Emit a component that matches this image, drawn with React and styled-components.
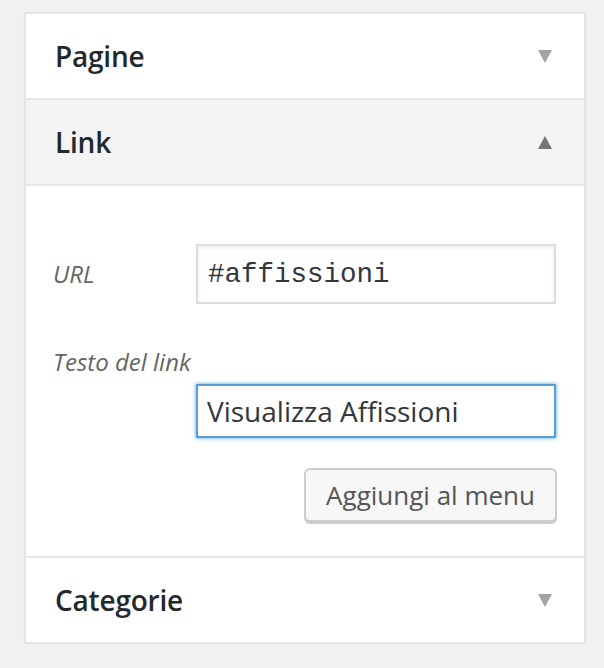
import React from 'react';
import styled, { createGlobalStyle } from 'styled-components';

const GlobalStyle = createGlobalStyle`
  html, body {
    margin: 0;
    padding: 0;
    background: #f1f1f1;
  }
  body {
    font-family: 'Open Sans', 'Noto Sans', Arial, sans-serif;
    color: #23282d;
  }
`;

const Page = styled.div`
  padding: 12px 0 0 24px;
`;

const Panel = styled.div`
  width: 558px;
  border: 2px solid #e5e5e5;
  background: #fff;
  box-shadow: 0 2px 2px rgba(0, 0, 0, 0.04);
`;

const Section = styled.div`
  & + & {
    border-top: 2px solid #e5e5e5;
  }
`;

const Header = styled.div`
  display: flex;
  align-items: center;
  justify-content: space-between;
  height: 84px;
  padding: 0 32px 0 29px;
  background: ${p => (p.$open ? '#f4f4f4' : '#fff')};
  border-bottom: ${p => (p.$open ? '2px solid #e5e5e5' : 'none')};
`;

const Title = styled.h3`
  margin: 0;
  font-size: 28px;
  font-weight: 600;
  color: #23282d;
  letter-spacing: -0.2px;
`;

const Arrow = styled.svg`
  width: 14px;
  height: 13px;
  display: block;
  fill: ${p => (p.$open ? '#72777c' : '#a0a5aa')};
`;

const Body = styled.div`
  padding: 58px 28px 34px 27px;
  display: flex;
  flex-direction: column;
`;

const Row = styled.div`
  display: flex;
  align-items: center;
`;

const Label = styled.label`
  font-style: italic;
  font-size: 24px;
  line-height: 32px;
  color: #666;
  width: ${p => (p.$inline ? '143px' : 'auto')};
  flex-shrink: 0;
`;

const Input = styled.input`
  box-sizing: border-box;
  width: 360px;
  height: ${p => (p.$code ? '60px' : '54px')};
  margin: 0;
  padding: 0 0 0 ${p => (p.$code ? '10px' : '9px')};
  border: 2px solid ${p => (p.$focus ? '#5b9dd9' : '#ddd')};
  box-shadow: ${p =>
    p.$focus ? '0 0 4px rgba(30, 140, 190, 0.8)' : 'inset 0 2px 4px rgba(0, 0, 0, 0.07)'};
  font-family: ${p => (p.$code ? "'Liberation Mono', 'DejaVu Sans Mono', monospace" : "'Open Sans', sans-serif")};
  font-size: ${p => (p.$code ? '27.5px' : '28px')};
  color: #32373c;
  background: #fff;
  outline: none;
`;

const FieldStack = styled.div`
  display: flex;
  flex-direction: column;
  margin-top: 42px;
  gap: 6px;
  ${Input} {
    align-self: flex-end;
  }
`;

const Actions = styled.div`
  display: flex;
  justify-content: flex-end;
  margin-top: 30px;
`;

const Button = styled.button`
  box-sizing: border-box;
  height: 54px;
  padding: 0 20px;
  margin-right: -1px;
  border: 2px solid #ccc;
  border-radius: 6px;
  background: #f7f7f7;
  box-shadow: 0 2px 0 #ccc;
  color: #555;
  font-family: 'Open Sans', sans-serif;
  font-size: 26px;
  cursor: pointer;
`;

function ArrowIcon({ open }) {
  return (
    <Arrow $open={open} viewBox="0 0 14 13">
      {open ? <polygon points="7,0 14,13 0,13" /> : <polygon points="0,0 14,0 7,13" />}
    </Arrow>
  );
}

function SectionHeader({ title, open }) {
  return (
    <Header $open={open}>
      <Title>{title}</Title>
      <ArrowIcon open={open} />
    </Header>
  );
}

export default function App() {
  return (
    <>
      <GlobalStyle />
      <Page>
        <Panel>
          <Section>
            <SectionHeader title="Pagine" />
          </Section>
          <Section>
            <SectionHeader title="Link" open />
            <Body>
              <Row>
                <Label $inline htmlFor="menu-item-url">URL</Label>
                <Input id="menu-item-url" $code defaultValue="#affissioni" />
              </Row>
              <FieldStack>
                <Label htmlFor="menu-item-name">Testo del link</Label>
                <Input id="menu-item-name" $focus defaultValue="Visualizza Affissioni" />
              </FieldStack>
              <Actions>
                <Button type="button">Aggiungi al menu</Button>
              </Actions>
            </Body>
          </Section>
          <Section>
            <SectionHeader title="Categorie" />
          </Section>
        </Panel>
      </Page>
    </>
  );
}
